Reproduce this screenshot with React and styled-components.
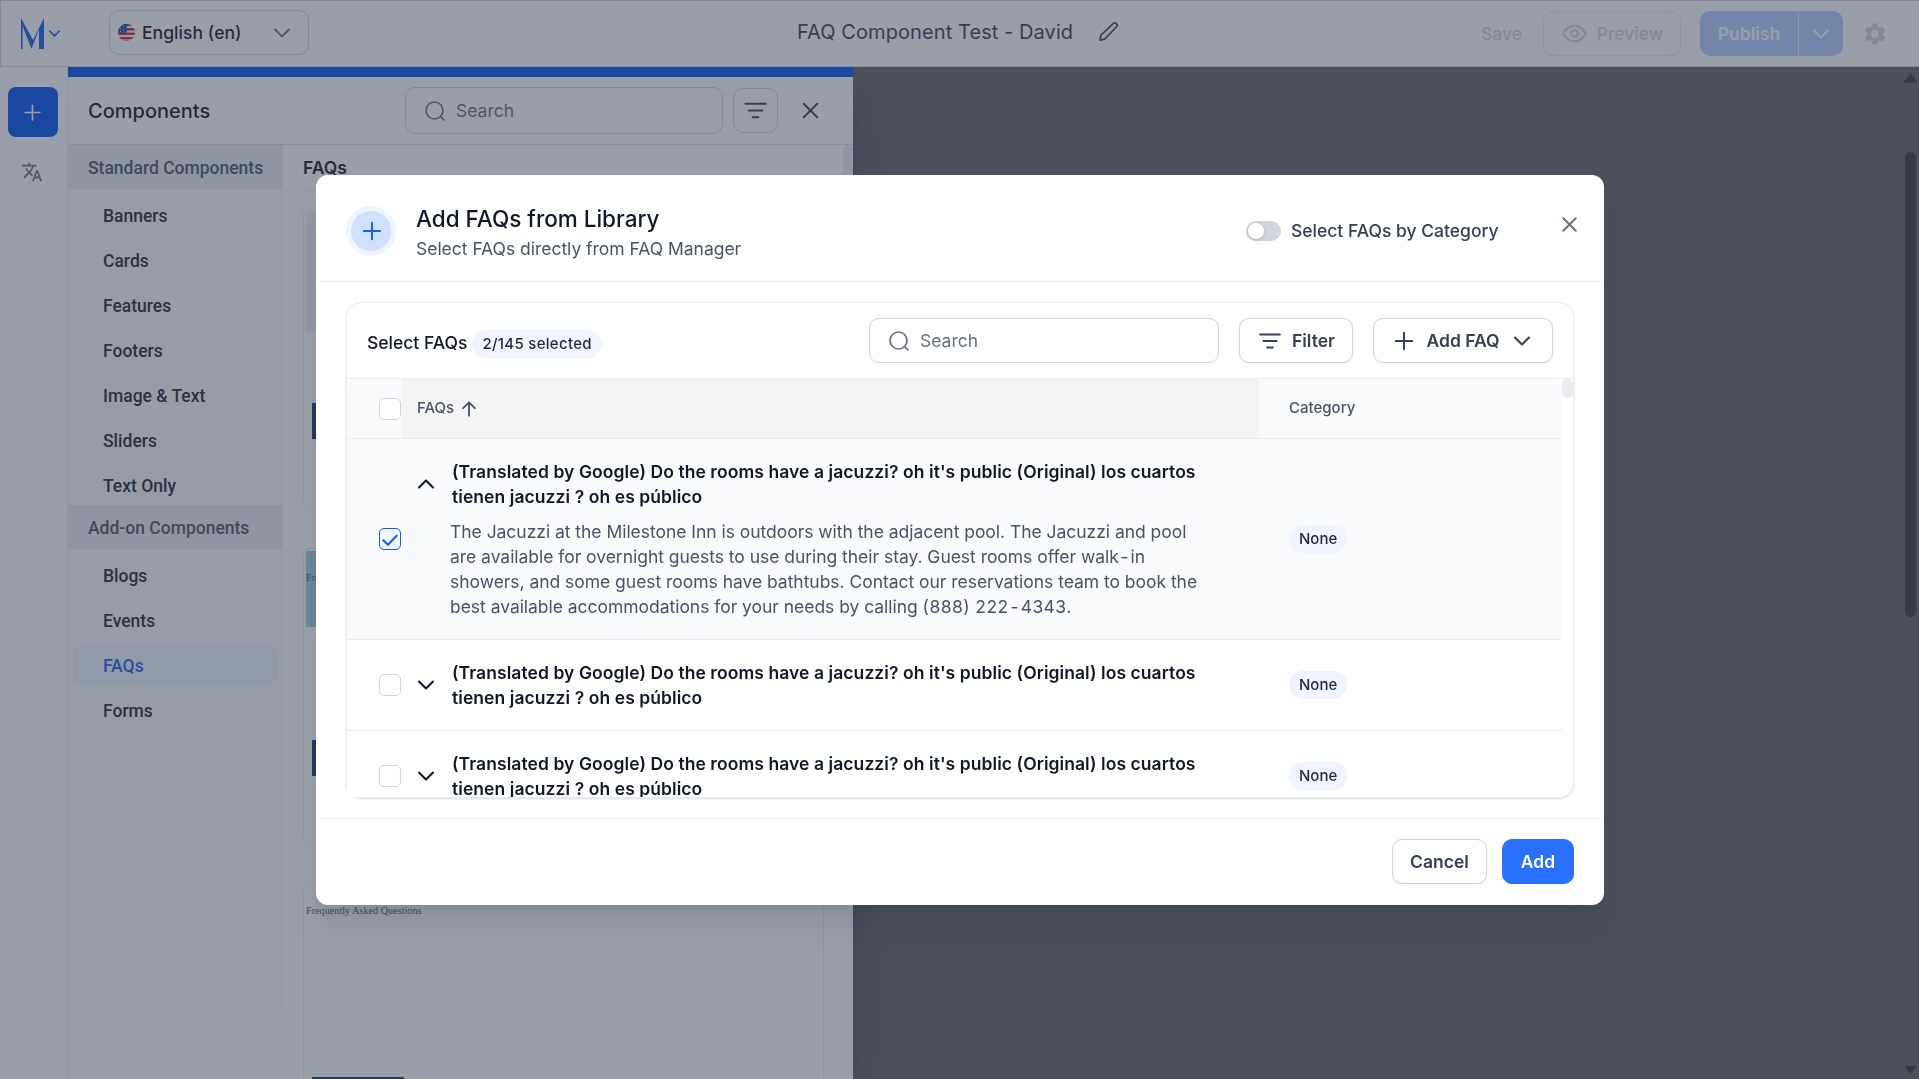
import React from "react";
import styled, { createGlobalStyle } from "styled-components";

const COLOR = {
  WHITE: "#ffffff",
  GRAY_50: "#f9fafb",
  GRAY_200: "#eaecf0",
  GRAY_300: "#d0d5dd",
  GRAY_500: "#667085",
  GRAY_600: "#475467",
  GRAY_700: "#344054",
  GRAY_900: "#101828",
  BLUE_50: "#eff4ff",
  BLUE_100: "#d1e0ff",
  BLUE_200: "#b2ccff",
  BLUE_600: "#155eef",
  BLUE_700: "#004eeb",
};

const STANDARD = ["Banners", "Cards", "Features", "Footers", "Image & Text", "Sliders", "Text Only"];
const ADD_ON = ["Blogs", "Events", "FAQs", "Forms"];

const QUESTION =
  "(Translated by Google) Do the rooms have a jacuzzi? oh it's public (Original) los cuartos\ntienen jacuzzi ? oh es público";

const FAQS = [
  { id: 1, checked: true, open: true },
  { id: 2, checked: false, open: false },
  { id: 3, checked: false, open: false },
];

const ICONS = {
  plus: "M12 5v14M5 12h14",
  close: "M18 6 6 18M6 6l12 12",
  down: "m6 9 6 6 6-6",
  up: "m6 15 6-6 6 6",
  filter: "M3 6h18M6 12h12M9.5 18h5",
  search: "m21 21-3.6-3.6M20 11.5a8.5 8.5 0 1 1-17 0 8.5 8.5 0 0 1 17 0Z",
  arrowUp: "M12 20V4M5 11l7-7 7 7",
  pencil: "M3 21l1-5L17 3.5a2.1 2.1 0 0 1 3 0l.5.5a2.1 2.1 0 0 1 0 3L8 20l-5 1Z",
  check: "M4 13.5l5.5 5.5L20 8",
};

function Icon({ name, size = 24, width = 2 }) {
  return (
    <Svg width={size} height={size} viewBox="0 0 24 24" strokeWidth={width}>
      <path d={ICONS[name]} />
    </Svg>
  );
}

function Flag() {
  return (
    <svg width="17" height="17" viewBox="0 0 17 17">
      <clipPath id="flag">
        <circle cx="8.5" cy="8.5" r="8.5" />
      </clipPath>
      <g clipPath="url(#flag)">
        <rect width="17" height="17" fill="#f0f0f0" />
        <path d="M0 1h17M0 5.4h17M0 9.8h17M0 14.2h17M0 17.5h17" stroke="#d80027" strokeWidth="2.1" />
        <rect width="8.6" height="8.8" fill="#0052b4" />
        <path d="M2 4.5h1M5 2.5h1M5 6h1M2 7.4h1" stroke="#f0f0f0" strokeWidth="1" />
      </g>
    </svg>
  );
}

function TopBar() {
  return (
    <Bar>
      <Brand>
        <svg width="24" height="32" viewBox="0 0 24 32" fill={COLOR.BLUE_600}>
          <path d="M0 0 12 22 23 0V31H18V11L10.5 31 1.6 8V31H0Z" />
        </svg>
        <Icon name="down" size={19} width={2} />
      </Brand>
      <Language>
        <Flag />
        <span>English (en)</span>
        <Icon name="down" size={28} width={1.6} />
      </Language>
      <PageTitle>
        FAQ Component Test - David
        <Icon name="pencil" size={23} width={1.7} />
      </PageTitle>
      <Actions>
        <Save>Save</Save>
        <Preview>
          <Svg width="27" height="27" viewBox="0 0 24 24" strokeWidth="1.9">
            <path d="M2.3 12.6a1 1 0 0 1 0-1.2C3.6 9.3 7 5 12 5s8.4 4.3 9.7 6.4a1 1 0 0 1 0 1.2C20.4 14.7 17 19 12 19s-8.4-4.3-9.7-6.4Z" />
            <circle cx="12" cy="12" r="3" />
          </Svg>
          Preview
        </Preview>
        <Publish>
          <span>Publish</span>
          <i>
            <Icon name="down" size={28} width={1.7} />
          </i>
        </Publish>
        <Gear width="26" height="26" viewBox="0 0 24 24">
          <path d="M19.140 12.940c.040-.300.060-.610.060-.940s-.020-.640-.070-.940l2.030-1.580a.49.49 0 0 0 .120-.610l-1.920-3.320a.488.488 0 0 0-.590-.220l-2.390.960c-.500-.380-1.030-.700-1.620-.940l-.360-2.540a.484.484 0 0 0-.480-.410h-3.840c-.240 0-.430.170-.470.410l-.360 2.540c-.590.240-1.130.570-1.620.940l-2.390-.960c-.220-.080-.470 0-.590.220L2.740 8.870c-.120.210-.080.470.120.610l2.030 1.580c-.050.300-.090.630-.090.940s.020.640.070.940l-2.030 1.580a.49.49 0 0 0-.120.610l1.920 3.320c.120.220.370.290.590.220l2.390-.960c.500.380 1.030.700 1.620.940l.360 2.540c.050.240.240.410.480.410h3.840c.240 0 .440-.170.470-.410l.360-2.540c.590-.240 1.130-.560 1.620-.940l2.390.960c.220.080.470 0 .590-.220l1.920-3.320a.49.49 0 0 0-.120-.610l-2.010-1.580ZM12 15.600A3.610 3.610 0 0 1 8.400 12c0-1.980 1.620-3.600 3.600-3.600s3.600 1.620 3.600 3.600-1.620 3.600-3.600 3.600Z" />
        </Gear>
      </Actions>
    </Bar>
  );
}

function ComponentsPanel() {
  return (
    <Panel>
      <PanelHeader>
        <h2>Components</h2>
        <SearchBox $width={318} $height={47}>
          <Icon name="search" size={24} width={1.7} />
          Search
        </SearchBox>
        <SquareButton>
          <Icon name="filter" size={27} width={1.9} />
        </SquareButton>
        <Icon name="close" size={27} width={1.7} />
      </PanelHeader>
      <PanelBody>
        <Menu>
          <MenuTitle>Standard Components</MenuTitle>
          {STANDARD.map((item) => (
            <MenuItem key={item}>{item}</MenuItem>
          ))}
          <MenuTitle>Add-on Components</MenuTitle>
          {ADD_ON.map((item) => (
            <MenuItem key={item} $active={item === "FAQs"}>
              {item}
            </MenuItem>
          ))}
        </Menu>
        <Previews>
          <h3>FAQs</h3>
          <Card $height={298}>
            <Block $height={120} $color="#eeeef2" />
            <Block $height={70} />
            <Block $height={36} $color="#182e60" $inset />
          </Card>
          <Card $height={296}>
            <Block $height={76} $color="#a2cedc">
              <Serif $top={21}>Frequently Asked Questions</Serif>
            </Block>
            <Block $height={113} />
            <Block $height={36} $color="#182e60" $inset />
          </Card>
          <Card $height={296}>
            <Block $height={190}>
              <Serif $top={18}>Frequently Asked Questions</Serif>
            </Block>
            <Block $height={36} $color="#182e60" $inset />
          </Card>
        </Previews>
        <PanelScroll />
      </PanelBody>
    </Panel>
  );
}

function FaqAnswer() {
  return (
    <Answer>
      {"The Jacuzzi at the Milestone Inn is outdoors with the adjacent pool. The Jacuzzi and pool\n"}
      {"are available for overnight guests to use during their stay. Guest rooms offer walk"}
      <Hyphen>-</Hyphen>
      {"in\n"}
      {"showers, and some guest rooms have bathtubs. Contact our reservations team to book the\n"}
      {"best available accommodations for your needs by calling "}
      <Phone>
        (888) 222<Hyphen>-</Hyphen>4343.
      </Phone>
    </Answer>
  );
}

function FaqRow({ faq }) {
  return (
    <Row $active={faq.checked}>
      <CheckCell>
        <Checkbox $checked={faq.checked}>
          {faq.checked && <Icon name="check" size={20} width={2.5} />}
        </Checkbox>
      </CheckCell>
      <FaqCell>
        <Question>
          <Icon name={faq.open ? "up" : "down"} size={28} width={1.8} />
          <p>{QUESTION}</p>
        </Question>
        {faq.open && <FaqAnswer />}
      </FaqCell>
      <CategoryCell>
        <Pill>None</Pill>
      </CategoryCell>
    </Row>
  );
}

function Library() {
  return (
    <Modal>
      <ModalHeader>
        <RoundIcon>
          <Icon name="plus" size={28} width={1.7} />
        </RoundIcon>
        <Heading>
          <h1>Add FAQs from Library</h1>
          <p>Select FAQs directly from FAQ Manager</p>
        </Heading>
        <Toggle />
        <ToggleLabel>Select FAQs by Category</ToggleLabel>
        <Close>
          <Icon name="close" size={25} width={1.9} />
        </Close>
      </ModalHeader>
      <ModalBody>
        <TableCard>
          <Toolbar>
            <Selected>
              <span>Select FAQs</span>
              <Pill $spacing={0.3}>2/145 selected</Pill>
            </Selected>
            <SearchBox $width={350} $height={45}>
              <Icon name="search" size={24} width={1.7} />
              Search
            </SearchBox>
            <Button $width={114} $gap={9}>
              <Icon name="filter" size={26} width={2} />
              Filter
            </Button>
            <Button $width={180} $gap={9}>
              <Icon name="plus" size={28} width={1.7} />
              Add FAQ
              <Icon name="down" size={28} width={1.8} />
            </Button>
          </Toolbar>
          <Scroller>
            <Table>
              <HeadRow>
                <CheckCell>
                  <Checkbox />
                </CheckCell>
                <HeadFaq>
                  <span>FAQs</span>
                  <Icon name="arrowUp" size={20} width={2.2} />
                </HeadFaq>
                <CategoryCell>
                  <span>Category</span>
                </CategoryCell>
              </HeadRow>
              {FAQS.map((faq) => (
                <FaqRow key={faq.id} faq={faq} />
              ))}
            </Table>
            <Thumb />
          </Scroller>
        </TableCard>
      </ModalBody>
      <ModalFooter>
        <Button $width={95}>Cancel</Button>
        <Button $width={72} $primary>
          Add
        </Button>
      </ModalFooter>
    </Modal>
  );
}

export default function App() {
  return (
    <Page>
      <GlobalStyle />
      <TopBar />
      <Workspace>
        <Rail>
          <AddButton>
            <Icon name="plus" size={25} width={1.6} />
          </AddButton>
          <TranslateIcon width="22" height="22" viewBox="0 0 24 24">
            <path d="m12.870 15.070-2.540-2.510.030-.030A17.520 17.520 0 0 0 14.070 6H17V4h-7V2H8v2H1v1.990h11.170C11.500 7.920 10.440 9.750 9 11.350 8.070 10.320 7.300 9.190 6.690 8h-2c.730 1.630 1.730 3.170 2.980 4.560l-5.090 5.020L4 19l5-5 3.110 3.110.760-2.040ZM18.500 10h-2L12 22h2l1.120-3h4.750L21 22h2l-4.500-12Zm-2.620 7 1.620-4.330L19.120 17h-3.240Z" />
          </TranslateIcon>
        </Rail>
        <ComponentsPanel />
        <Canvas>
          <Gutter />
          <Scrollbar>
            <svg width="13" height="10" viewBox="0 0 13 10">
              <path d="M6.5 0.5 12.5 9H0.5Z" fill="#363636" stroke="#363636" strokeLinejoin="round" />
            </svg>
            <PageThumb />
            <svg width="13" height="10" viewBox="0 0 13 10">
              <path d="M6.5 9.5 12 1H1Z" fill="#363636" />
            </svg>
          </Scrollbar>
        </Canvas>
      </Workspace>
      <Overlay>
        <Library />
      </Overlay>
    </Page>
  );
}

const GlobalStyle = createGlobalStyle`
  * {
    box-sizing: border-box;
  }

  body {
    margin: 0;
    overflow: hidden;
    font-family: Inter, sans-serif;
    font-size: 17.5px;
    color: ${COLOR.GRAY_700};
  }

  h1, h2, h3, p {
    margin: 0;
    font-weight: 500;
  }
`;

const Page = styled.div`
  display: flex;
  flex-direction: column;
  width: 1919px;
  height: 1079px;
  overflow: hidden;
  background: ${COLOR.WHITE};
`;

const Svg = styled.svg`
  flex-shrink: 0;
  fill: none;
  stroke: currentColor;
  stroke-linecap: round;
  stroke-linejoin: round;
`;

const Bar = styled.header`
  display: grid;
  grid-template-columns: 88px 200px 1fr auto;
  align-items: center;
  flex-shrink: 0;
  height: 67px;
  padding: 0 31px 0 20px;
  border: 1px solid #d4d7dc;
  border-right: none;
`;

const Brand = styled.div`
  display: flex;
  align-items: center;
  color: ${COLOR.BLUE_600};
`;

const Language = styled.div`
  display: flex;
  align-items: center;
  height: 45px;
  margin-top: -2px;
  padding: 0 12px 0 8px;
  border: 1px solid ${COLOR.GRAY_300};
  border-radius: 10px;
  color: ${COLOR.GRAY_500};

  span {
    flex: 1;
    margin-left: 7px;
    color: ${COLOR.GRAY_900};
    font-weight: 500;
    letter-spacing: 0.06px;
  }
`;

const PageTitle = styled.div`
  display: flex;
  align-items: center;
  gap: 24px;
  margin-left: 488px;
  margin-top: -4px;
  font-size: 20px;
  letter-spacing: 0.08px;
  white-space: nowrap;
`;

const Actions = styled.div`
  display: flex;
  align-items: center;
  color: ${COLOR.GRAY_300};
  font-weight: 500;
`;

const Save = styled.span`
  margin-right: 21px;
`;

const Preview = styled.div`
  display: flex;
  align-items: center;
  justify-content: center;
  gap: 9px;
  width: 138px;
  height: 45px;
  margin-right: 19px;
  border: 1px solid ${COLOR.GRAY_200};
  border-radius: 10px;
  box-shadow: 0 1px 2px rgba(16, 24, 40, 0.05);
`;

const Publish = styled.div`
  display: flex;
  width: 143px;
  height: 45px;
  margin-right: 19px;
  border-radius: 10px;
  background: ${COLOR.BLUE_200};
  color: ${COLOR.WHITE};
  font-weight: 600;

  span,
  i {
    display: flex;
    align-items: center;
    justify-content: center;
  }

  span {
    width: 98px;
  }

  i {
    flex: 1;
    border-left: 1px solid ${COLOR.GRAY_200};
  }
`;

const Gear = styled.svg`
  fill: ${COLOR.GRAY_300};
`;

const Workspace = styled.div`
  display: flex;
  flex: 1;
  min-height: 0;
`;

const Rail = styled.nav`
  display: flex;
  flex-direction: column;
  align-items: center;
  gap: 24px;
  width: 68px;
  padding: 20px 1px 0 0;
  border-right: 1px solid ${COLOR.GRAY_200};
`;

const AddButton = styled.div`
  display: flex;
  align-items: center;
  justify-content: center;
  width: 50px;
  height: 50px;
  padding-right: 2px;
  border-radius: 8px;
  background: ${COLOR.BLUE_700};
  color: ${COLOR.WHITE};
`;

const TranslateIcon = styled.svg`
  margin-right: 2px;
  fill: ${COLOR.GRAY_500};
`;

const Panel = styled.section`
  z-index: 1;
  display: flex;
  flex-direction: column;
  width: 785px;
  border-top: 10px solid ${COLOR.BLUE_700};
  background: ${COLOR.WHITE};
  box-shadow: 18px 20px 30px -14px rgba(16, 24, 60, 0.28);
`;

const PanelHeader = styled.div`
  display: flex;
  align-items: center;
  flex-shrink: 0;
  height: 68px;
  padding: 0 29px 0 20px;
  border-bottom: 1px solid #dcdfe5;

  h2 {
    flex: 1;
    color: ${COLOR.GRAY_900};
    font-size: 20px;
  }
`;

const SearchBox = styled.div`
  display: flex;
  align-items: center;
  gap: 9px;
  width: ${({ $width }) => $width}px;
  height: ${({ $height }) => $height}px;
  padding-left: 17px;
  border: 1px solid ${COLOR.GRAY_300};
  border-radius: 10px;
  color: ${COLOR.GRAY_500};
`;

const SquareButton = styled.div`
  display: flex;
  align-items: center;
  justify-content: center;
  width: 45px;
  height: 45px;
  margin: 0 19px 0 10px;
  border: 1px solid ${COLOR.GRAY_300};
  border-radius: 10px;
`;

const PanelBody = styled.div`
  display: flex;
  flex: 1;
  min-height: 0;
`;

const Menu = styled.div`
  width: 215px;
  height: 865px;
  background: ${COLOR.GRAY_50};
  font-family: Roboto, sans-serif;
  font-weight: 500;
`;

const MenuTitle = styled.div`
  height: 45px;
  padding: 1px 0 0 20px;
  background: ${COLOR.GRAY_200};
  color: ${COLOR.GRAY_600};
  line-height: 45px;
`;

const MenuItem = styled.div`
  height: 40px;
  margin: 5px 5px 0;
  padding: 1px 0 0 30px;
  border-radius: 8px;
  background: ${({ $active }) => ($active ? COLOR.BLUE_50 : "transparent")};
  color: ${({ $active }) => ($active ? COLOR.BLUE_600 : "#1f2430")};
  line-height: 41px;
`;

const Previews = styled.div`
  width: 521px;
  margin-left: 20px;
  overflow: hidden;

  h3 {
    height: 46px;
    margin-bottom: 19px;
    border-bottom: 1px solid ${COLOR.GRAY_200};
    color: ${COLOR.GRAY_900};
    font-size: 17.5px;
    font-weight: 600;
    line-height: 46px;
  }
`;

const Card = styled.div`
  height: ${({ $height }) => $height}px;
  margin-bottom: 40px;
  padding: 2px;
  border: 1px solid ${COLOR.GRAY_200};
  border-radius: 6px;
`;

const Block = styled.div`
  height: ${({ $height }) => $height}px;
  width: ${({ $inset }) => ($inset ? "92px" : "auto")};
  margin-left: ${({ $inset }) => ($inset ? 6 : 0)}px;
  background: ${({ $color }) => $color || COLOR.WHITE};
`;

const Serif = styled.p`
  padding-top: ${({ $top }) => $top}px;
  color: ${COLOR.GRAY_600};
  font: 10.2px "Liberation Serif", serif;
`;

const PanelScroll = styled.div`
  width: 10px;
  height: 500px;
  margin-left: 19px;
  border-radius: 5px;
  background: ${COLOR.GRAY_200};
`;

const Canvas = styled.main`
  display: flex;
  justify-content: flex-end;
  flex: 1;
  background: #626262;
`;

const Gutter = styled.div`
  width: 16px;
  height: 59px;
  margin-top: 58px;
  border-top: 3px solid #5c5e68;
  border-bottom: 1px solid #585a60;
`;

const Scrollbar = styled.div`
  display: flex;
  flex-direction: column;
  align-items: center;
  width: 18px;
  padding: 6px 0 4px 1px;
`;

const PageThumb = styled.div`
  width: 11px;
  height: 465px;
  margin: 69px 0 auto;
  border-radius: 6px;
  background: #363636;
`;

const Overlay = styled.div`
  position: fixed;
  inset: 0;
  z-index: 2;
  padding: 175px 0 0 316px;
  background: rgba(52, 64, 84, 0.5);
`;

const Modal = styled.div`
  display: flex;
  flex-direction: column;
  width: 1288px;
  height: 730px;
  padding: 2px;
  border-radius: 12px;
  background: ${COLOR.WHITE};
  box-shadow: 0 25px 30px -5px rgba(16, 24, 40, 0.1), 0 10px 10px -5px rgba(16, 24, 40, 0.04);
`;

const ModalHeader = styled.div`
  display: flex;
  height: 105px;
  padding: 29px 20px 0 28px;
  border-bottom: 1px solid ${COLOR.GRAY_200};
`;

const RoundIcon = styled.div`
  display: flex;
  align-items: center;
  justify-content: center;
  width: 50px;
  height: 50px;
  padding: 0 0 1px 1px;
  border: 5px solid ${COLOR.BLUE_50};
  border-radius: 50%;
  background: ${COLOR.BLUE_100};
  color: ${COLOR.BLUE_600};
`;

const Heading = styled.div`
  flex: 1;
  margin: -5px 0 0 20px;

  h1 {
    color: ${COLOR.GRAY_900};
    font-size: 22.5px;
    line-height: 35px;
  }

  p {
    color: ${COLOR.GRAY_600};
    font-weight: 400;
    letter-spacing: -0.02px;
    line-height: 25px;
  }
`;

const Toggle = styled.div`
  width: 35px;
  height: 20px;
  margin: 15px 10px 0 0;
  padding: 2px;
  border-radius: 10px;
  background: ${COLOR.GRAY_300};

  &::before {
    content: "";
    display: block;
    width: 16px;
    height: 16px;
    border-radius: 50%;
    background: ${COLOR.WHITE};
    box-shadow: 0 1px 3px rgba(16, 24, 40, 0.2);
  }
`;

const ToggleLabel = styled.span`
  width: 266px;
  font-weight: 500;
  line-height: 50px;
`;

const Close = styled.span`
  margin-top: 6px;
  color: ${COLOR.GRAY_500};
`;

const ModalBody = styled.div`
  height: 536px;
  padding: 20px 28px 0;
`;

const TableCard = styled.div`
  height: 496px;
  border: 1px solid ${COLOR.GRAY_200};
  border-radius: 15px;
  box-shadow: 0 1px 3px rgba(16, 24, 40, 0.1), 0 1px 2px rgba(16, 24, 40, 0.06);
`;

const Toolbar = styled.div`
  display: flex;
  align-items: center;
  gap: 20px;
  height: 76px;
  padding: 0 20px;
  border-bottom: 1px solid ${COLOR.GRAY_200};
`;

const Selected = styled.div`
  display: flex;
  align-items: center;
  flex: 1;
  gap: 5px;
  padding-top: 7px;
  color: ${COLOR.GRAY_900};
  font-weight: 500;

  span:first-child {
    padding-bottom: 3px;
  }
`;

const Pill = styled.span`
  height: 28px;
  padding: 0 10px;
  border-radius: 14px;
  background: ${COLOR.BLUE_50};
  color: #1d2939;
  font-size: 15px;
  font-weight: 500;
  letter-spacing: ${({ $spacing }) => $spacing || 0}px;
  line-height: 28px;
`;

const Button = styled.div`
  display: flex;
  align-items: center;
  justify-content: center;
  gap: ${({ $gap }) => $gap || 0}px;
  width: ${({ $width }) => $width}px;
  height: 45px;
  border: 1px solid ${({ $primary }) => ($primary ? "#2970ff" : COLOR.GRAY_300)};
  border-radius: 10px;
  background: ${({ $primary }) => ($primary ? "#2970ff" : COLOR.WHITE)};
  box-shadow: 0 1px 2px rgba(16, 24, 40, 0.05);
  color: ${({ $primary }) => ($primary ? COLOR.WHITE : COLOR.GRAY_700)};
  font-weight: 600;
`;

const Scroller = styled.div`
  display: flex;
  height: 418px;
  overflow: hidden;
`;

const Table = styled.div`
  flex: 1;
`;

const Row = styled.div`
  display: grid;
  grid-template-columns: 55px 857px 1fr;
  align-items: center;
  padding: 20px 0;
  border-bottom: 1px solid ${COLOR.GRAY_200};
  background: ${({ $active }) => ($active ? COLOR.GRAY_50 : COLOR.WHITE)};
`;

const HeadRow = styled(Row)`
  height: 60px;
  padding: 0;
  border-radius: 10px 10px 0 0;
  background: ${COLOR.GRAY_50};
  color: ${COLOR.GRAY_600};
  font-size: 15px;
  font-weight: 500;

  span {
    padding-bottom: 2px;
  }
`;

const CheckCell = styled.div`
  padding-left: 32px;
`;

const Checkbox = styled.div`
  display: flex;
  align-items: center;
  justify-content: center;
  width: 22px;
  height: 22px;
  border: 1px solid ${({ $checked }) => ($checked ? COLOR.BLUE_600 : COLOR.GRAY_300)};
  border-radius: 5px;
  background: ${({ $checked }) => ($checked ? COLOR.BLUE_50 : COLOR.WHITE)};
  color: ${COLOR.BLUE_600};
`;

const HeadFaq = styled.div`
  display: flex;
  align-items: center;
  gap: 5px;
  height: 59px;
  padding-left: 15px;
  background: #f4f4f4;
`;

const FaqCell = styled.div`
  padding-left: 10px;
`;

const Question = styled.div`
  display: flex;
  align-items: center;
  gap: 12px;
  color: ${COLOR.GRAY_900};

  p {
    font-weight: 600;
    letter-spacing: 0.07px;
    line-height: 25px;
    white-space: pre;
  }
`;

const Answer = styled.p`
  margin: 10px 0 0 38px;
  color: ${COLOR.GRAY_600};
  font-weight: 400;
  letter-spacing: -0.035px;
  line-height: 25px;
  white-space: pre;
`;

const Hyphen = styled.span`
  padding: 0 1.8px;
`;

const Phone = styled.span`
  letter-spacing: 0.42px;
`;

const CategoryCell = styled.div`
  display: flex;
  padding-left: 30px;
`;

const Thumb = styled.div`
  width: 11px;
  height: 19px;
  border-radius: 6px;
  background: ${COLOR.GRAY_200};
`;

const ModalFooter = styled.div`
  display: flex;
  justify-content: flex-end;
  gap: 15px;
  padding: 20px 28px 0;
  border-top: 1px solid ${COLOR.GRAY_200};
`;
